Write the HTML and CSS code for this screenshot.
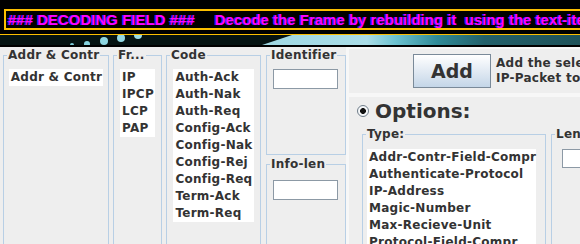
FILE: index.html
```html
<!DOCTYPE html>
<html lang="en">
<head>
  <meta charset="UTF-8">
  <title>PPP Frame Decoder</title>
  <link rel="stylesheet" href="styles.css">
</head>
<body>
  <header class="banner">
    <div class="banner-box">
      <span class="banner-title">### DECODING FIELD ###</span>
      <span class="banner-hint">Decode the Frame by rebuilding it&nbsp; using the text-items below</span>
    </div>
  </header>
  <div class="rule"></div>
  <svg class="strip" width="580" height="10" viewBox="0 0 580 10">
    <defs>
      <linearGradient id="wave" x1="0" y1="0" x2="1" y2="0">
        <stop offset="0" stop-color="#9fd8e3"/>
        <stop offset="0.33" stop-color="#aadde7"/>
        <stop offset="0.42" stop-color="#6cc2d0"/>
        <stop offset="0.55" stop-color="#2f8b98"/>
        <stop offset="0.7" stop-color="#22606a"/>
        <stop offset="1" stop-color="#1e5259"/>
      </linearGradient>
    </defs>
    <rect width="580" height="10" fill="#051312"/>
    <circle cx="72" cy="10" r="2" fill="#7fcfdc"/>
    <circle cx="87" cy="9" r="3" fill="#86d3df"/>
    <circle cx="104" cy="6" r="4" fill="#8dd6e1"/>
    <circle cx="121" cy="3" r="4" fill="#93d8e3"/>
    <circle cx="138" cy="0" r="4" fill="#98dae4"/>
    <polygon points="262,10 292,0 580,0 580,10" fill="url(#wave)"/>
  </svg>

  <main class="workspace">
    <section class="fields">
      <fieldset class="group g-addr">
        <legend>Addr &amp; Contr</legend>
        <ul class="list">
          <li>Addr &amp; Contr</li>
        </ul>
      </fieldset>
      <fieldset class="group g-frame">
        <legend>Fr...</legend>
        <ul class="list">
          <li>IP</li>
          <li>IPCP</li>
          <li>LCP</li>
          <li>PAP</li>
        </ul>
      </fieldset>
      <fieldset class="group g-code">
        <legend>Code</legend>
        <ul class="list">
          <li>Auth-Ack</li>
          <li>Auth-Nak</li>
          <li>Auth-Req</li>
          <li>Config-Ack</li>
          <li>Config-Nak</li>
          <li>Config-Rej</li>
          <li>Config-Req</li>
          <li>Term-Ack</li>
          <li>Term-Req</li>
        </ul>
      </fieldset>
      <div class="stack">
        <fieldset class="group g-id">
          <legend>Identifier</legend>
          <input class="field" type="text">
        </fieldset>
        <fieldset class="group g-info">
          <legend>Info-len</legend>
          <input class="field" type="text">
        </fieldset>
      </div>
    </section>

    <section class="side">
      <div class="add-bar">
        <button class="add-btn" type="button">Add</button>
        <p class="add-note">Add the selected items to the<br>IP-Packet to be decoded</p>
      </div>
      <div class="options">
        <label class="opt-head"><span class="radio"></span>Options:</label>
        <div class="opt-groups">
          <fieldset class="group g-type">
            <legend>Type:</legend>
            <ul class="list">
              <li>Addr-Contr-Field-Compr</li>
              <li>Authenticate-Protocol</li>
              <li>IP-Address</li>
              <li>Magic-Number</li>
              <li>Max-Recieve-Unit</li>
              <li>Protocol-Field-Compr</li>
            </ul>
          </fieldset>
          <fieldset class="group g-len">
            <legend>Length</legend>
            <input class="field" type="text">
          </fieldset>
        </div>
      </div>
    </section>
  </main>
</body>
</html>
```

FILE: styles.css
```css
body {
  margin: 0;
  width: 580px;
  height: 244px;
  overflow: hidden;
  background: #000;
  font-family: "DejaVu Sans", sans-serif;
  font-weight: bold;
  font-size: 12px;
  letter-spacing: 0.25px;
  color: #333;
}

/* top banner */
.banner {
  padding: 9px 0 0 4px;
  height: 21px;
}
.banner-box {
  display: flex;
  height: 17px;
  border: 2px solid #fcbf00;
  border-right: none;
  padding-left: 2px;
  white-space: nowrap;
  overflow: hidden;
  font-family: "Liberation Sans", Arial, sans-serif;
  font-size: 15px;
  letter-spacing: 0;
  line-height: 17px;
  color: #ff00ff;
  text-shadow: -1px 0 0 #2a2aff;
}
.banner-hint {
  margin-left: 20px;
}
.rule {
  margin-top: 4px;
  height: 1px;
  background: #fcbf00;
}
.strip {
  display: block;
  margin-bottom: 2px;
}

/* work area */
.workspace {
  display: flex;
  height: 197px;
}
.fields {
  display: flex;
  align-items: flex-start;
  width: 348px;
  padding-top: 1px;
  background: #eeeeee;
}
.side {
  flex: 1;
  padding: 2px 0 0 3px;
  background: #f7f7f7;
}

.group {
  margin: 0;
  padding: 0;
  min-width: 0;
  border: 1px solid #b8cfe5;
  height: 220px;
  box-sizing: border-box;
}
.group legend {
  margin-left: 3px;
  padding: 0 1px;
  line-height: 15px;
  white-space: nowrap;
}
.g-addr { margin-left: 3px; width: 106px; }
.g-frame { margin-left: 4px; width: 49px; }
.g-code { margin-left: 4px; width: 95px; }
.stack {
  margin-left: 5px;
  width: 80px;
}
.g-id { height: 107px; }
.g-info { margin-top: 2px; height: 120px; }

.list {
  list-style: none;
  margin: 6px auto 0;
  padding: 0 1px 0 2px;
  width: fit-content;
  background: #fff;
  line-height: 17px;
  white-space: nowrap;
}

.field {
  display: block;
  box-sizing: border-box;
  width: 65px;
  height: 20px;
  margin: 6px 0 0 6px;
  padding: 0;
  border: 1px solid #8c99a5;
  background: #fff;
}
.g-info .field { margin-top: 8px; }

/* add bar */
.add-bar {
  display: flex;
  align-items: center;
  height: 44px;
  padding-left: 64px;
  background: #eeeeee;
  white-space: nowrap;
  overflow: hidden;
}
.add-btn {
  width: 78px;
  height: 34px;
  margin: 0;
  flex-shrink: 0;
  border: 1px solid #7a8a99;
  background: linear-gradient(#ffffff, #dfe8f2 55%, #c4d6e8);
  font-family: "DejaVu Sans", sans-serif;
  font-weight: bold;
  font-size: 19px;
  color: #333;
}
.add-note {
  margin: 0 0 0 5px;
  line-height: 15px;
}

/* options */
.options {
  margin-top: 4px;
  height: 150px;
  padding: 1px 0 0 8px;
  background: #eeeeee;
  overflow: hidden;
}
.opt-head {
  display: flex;
  align-items: center;
  font-size: 20px;
  letter-spacing: 0;
  line-height: 26px;
}
.radio {
  box-sizing: border-box;
  width: 12px;
  height: 12px;
  margin-right: 6px;
  border: 1px solid #6f7d8a;
  border-radius: 50%;
  background: radial-gradient(circle, #111 0 2.6px, #f4f6f8 3.2px);
}
.opt-groups {
  display: flex;
  margin: 3px 0 0 5px;
}
.g-type { width: 184px; }
.g-type .list {
  margin: 7px 0 0 4px;
  width: 166px;
}
.g-len {
  margin-left: 5px;
  width: 60px;
}
.g-len .field {
  margin: 7px 0 0 10px;
  width: 60px;
  height: 19px;
}
```
